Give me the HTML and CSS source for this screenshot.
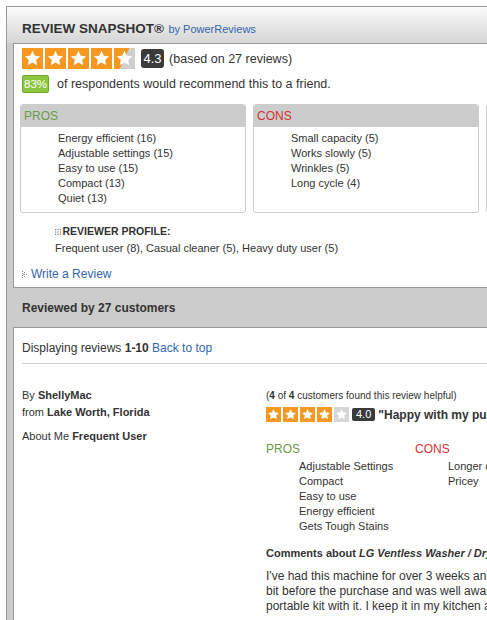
FILE: index.html
```html
<!DOCTYPE html>
<html lang="en">
<head>
<meta charset="utf-8">
<title>Review Snapshot</title>
<link rel="stylesheet" href="styles.css">
</head>
<body>
<svg class="defs" width="0" height="0" aria-hidden="true">
  <defs>
    <path id="starpath" d="M12 3.2l2.6 5.6 6.1.7-4.5 4.2 1.2 6-5.4-3-5.4 3 1.2-6-4.5-4.2 6.1-.7z" fill="#fff"/>
  </defs>
</svg>
<div class="widget">
  <div class="snap-head"><span class="snap-title">REVIEW SNAPSHOT®</span> <span class="by">by PowerReviews</span></div>
  <div class="snap-body">
    <div class="rating-row">
      <div class="stars big">
        <span class="star on"><svg viewBox="0 0 24 24"><use href="#starpath"/></svg></span>
        <span class="star on"><svg viewBox="0 0 24 24"><use href="#starpath"/></svg></span>
        <span class="star on"><svg viewBox="0 0 24 24"><use href="#starpath"/></svg></span>
        <span class="star on"><svg viewBox="0 0 24 24"><use href="#starpath"/></svg></span>
        <span class="star half"><svg viewBox="0 0 24 24"><use href="#starpath"/></svg></span>
      </div>
      <span class="score">4.3</span>
      <span class="based">(based on 27 reviews)</span>
    </div>
    <div class="recommend-row">
      <span class="pct">83%</span>
      <span class="recommend-text">of respondents would recommend this to a friend.</span>
    </div>
    <div class="tag-boxes">
      <section class="tag-box pros">
        <h3>PROS</h3>
        <ul>
          <li>Energy efficient (16)</li>
          <li>Adjustable settings (15)</li>
          <li>Easy to use (15)</li>
          <li>Compact (13)</li>
          <li>Quiet (13)</li>
        </ul>
      </section>
      <section class="tag-box cons">
        <h3>CONS</h3>
        <ul>
          <li>Small capacity (5)</li>
          <li>Works slowly (5)</li>
          <li>Wrinkles (5)</li>
          <li>Long cycle (4)</li>
        </ul>
      </section>
      <section class="tag-box uses" aria-hidden="true">
        <div class="blank-head"></div>
      </section>
    </div>
    <div class="profile">
      <div class="profile-title"><svg class="dots" viewBox="0 0 6 6" width="6" height="6"><g fill="#777"><rect x="0" y="0" width="1.2" height="1.2"/><rect x="2.4" y="0" width="1.2" height="1.2"/><rect x="4.8" y="0" width="1.2" height="1.2"/><rect x="0" y="2.4" width="1.2" height="1.2"/><rect x="2.4" y="2.4" width="1.2" height="1.2"/><rect x="4.8" y="2.4" width="1.2" height="1.2"/><rect x="0" y="4.8" width="1.2" height="1.2"/><rect x="2.4" y="4.8" width="1.2" height="1.2"/><rect x="4.8" y="4.8" width="1.2" height="1.2"/></g></svg>REVIEWER PROFILE:</div>
      <div>Frequent user (8), Casual cleaner (5), Heavy duty user (5)</div>
    </div>
    <div class="write">
      <svg class="arrow" viewBox="0 0 5 7" width="5" height="7"><g fill="#888"><rect x="0" y="0" width="1" height="1"/><rect x="0" y="2" width="1" height="1"/><rect x="0" y="4" width="1" height="1"/><rect x="0" y="6" width="1" height="1"/><rect x="2" y="1" width="1" height="1"/><rect x="2" y="5" width="1" height="1"/><rect x="4" y="3" width="1" height="1"/><rect x="1" y="3" width="1" height="1"/><rect x="2" y="3" width="1" height="1"/></g></svg>
      <a class="link" href="#">Write a Review</a>
    </div>
  </div>
  <div class="reviews-head">Reviewed by 27 customers</div>
  <div class="reviews-body">
    <div class="displaying">Displaying reviews <b>1-10</b> <a class="link" href="#">Back to top</a></div>
    <div class="review">
      <div class="reviewer">
        <div>By <b>ShellyMac</b></div>
        <div>from <b>Lake Worth, Florida</b></div>
        <div class="about">About Me <b>Frequent User</b></div>
      </div>
      <div class="review-main">
        <div class="helpful">(<b>4</b> of <b>4</b> customers found this review helpful)</div>
        <div class="review-rating">
          <div class="stars small">
            <span class="star on"><svg viewBox="0 0 24 24"><use href="#starpath"/></svg></span>
            <span class="star on"><svg viewBox="0 0 24 24"><use href="#starpath"/></svg></span>
            <span class="star on"><svg viewBox="0 0 24 24"><use href="#starpath"/></svg></span>
            <span class="star on"><svg viewBox="0 0 24 24"><use href="#starpath"/></svg></span>
            <span class="star off"><svg viewBox="0 0 24 24"><use href="#starpath"/></svg></span>
          </div>
          <span class="score small-score">4.0</span>
          <span class="review-title">"Happy with my purchase"</span>
        </div>
        <div class="review-tags">
          <div class="rtag pros">
            <h4>PROS</h4>
            <ul>
              <li>Adjustable Settings</li>
              <li>Compact</li>
              <li>Easy to use</li>
              <li>Energy efficient</li>
              <li>Gets Tough Stains</li>
            </ul>
          </div>
          <div class="rtag cons">
            <h4>CONS</h4>
            <ul>
              <li>Longer cycle</li>
              <li>Pricey</li>
            </ul>
          </div>
        </div>
        <div class="comments-title">Comments about <i>LG Ventless Washer / Dryer Combo</i>:</div>
        <p class="comments-text">I've had this machine for over 3 weeks and love it. I researched it quite a<br>bit before the purchase and was well aware that I needed to buy the<br>portable kit with it. I keep it in my kitchen and hook it up to the sink.</p>
      </div>
    </div>
  </div>
</div>
</body>
</html>
```

FILE: styles.css
```css
html, body {
  margin: 0;
  padding: 0;
  overflow: hidden;
}

body {
  font-family: "Liberation Sans", Arial, sans-serif;
  color: #333;
  background: #fff;
}

.defs {
  position: absolute;
  width: 0;
  height: 0;
}

.link {
  color: #3366aa;
  text-decoration: none;
}

.widget {
  width: 780px;
  margin: 6px 0 0 6px;
  border: 1px solid #999;
  background: #ccc;
}

.snap-head {
  background: linear-gradient(#fbfbfb, #d5d5d5);
  padding: 13px 15px 6px;
  line-height: 16px;
  white-space: nowrap;
}

.snap-title {
  font-size: 13.5px;
  font-weight: bold;
  color: #333;
}

.by {
  font-size: 11px;
  color: #3366aa;
}

.snap-body {
  background: #fff;
  border: 1px solid #999;
  margin: 0 6px;
  padding: 4px 8px 5px;
}

.rating-row {
  display: flex;
  align-items: center;
  height: 21px;
}

.stars {
  display: flex;
  gap: 2px;
}

.star {
  display: block;
  background: #f6971f;
}

.star svg {
  display: block;
  width: 100%;
  height: 100%;
}

.stars.big .star {
  width: 21px;
  height: 21px;
}

.star.half {
  background: linear-gradient(115deg, #f6971f 50%, #cfcfcf 50%);
}

.star.off {
  background: #d6d6d6;
}

.score {
  margin-left: 6px;
  background: #3a3a3a;
  color: #fff;
  font-size: 13px;
  height: 19px;
  line-height: 19px;
  padding: 0 2.5px;
  border-radius: 3px;
}

.based {
  margin-left: 5px;
  font-size: 12.5px;
  white-space: nowrap;
}

.recommend-row {
  margin-top: 6px;
  display: flex;
  align-items: center;
  gap: 8px;
  height: 18px;
}

.pct {
  box-sizing: border-box;
  width: 27px;
  height: 18px;
  background: #8cc63f;
  border: 1px solid #72a92e;
  border-radius: 2px;
  color: #fff;
  font-size: 11.5px;
  line-height: 16px;
  text-align: center;
}

.recommend-text {
  font-size: 12.5px;
  white-space: nowrap;
}

.tag-boxes {
  margin: 11px 0 0 -2px;
  display: flex;
  gap: 7px;
}

.tag-box {
  flex: none;
  box-sizing: border-box;
  width: 226px;
  height: 109px;
  border: 1px solid #ccc;
  border-radius: 3px;
  background: #fff;
  overflow: hidden;
}

.tag-box h3 {
  margin: 0;
  background: #ccc;
  height: 22px;
  line-height: 23px;
  padding: 0 3px;
  font-size: 12px;
  font-weight: normal;
}

.blank-head {
  height: 22px;
  background: #ccc;
}

.pros h3, .pros h4 {
  color: #6b9b47;
}

.cons h3, .cons h4 {
  color: #cc3333;
}

.tag-box ul {
  list-style: none;
  margin: 0;
  padding: 4px 0 0 37px;
  font-size: 11px;
  line-height: 15px;
}

.profile {
  margin-top: 10px;
  padding-left: 33px;
  font-size: 11px;
  line-height: 17px;
  white-space: nowrap;
}

.profile-title {
  display: flex;
  align-items: center;
  gap: 1.5px;
  font-size: 10.5px;
  font-weight: bold;
}

.write {
  margin-top: 9px;
  display: flex;
  align-items: center;
  gap: 4px;
  font-size: 12px;
  line-height: 16px;
}

.reviews-head {
  padding: 13px 15px 11px;
  line-height: 15px;
  font-size: 12px;
  font-weight: bold;
  color: #333;
}

.reviews-body {
  background: #fff;
  border: 1px solid #999;
  margin: 0 6px;
  padding: 0 8px 40px;
}

.displaying {
  padding: 12px 0 7px;
  line-height: 16px;
  font-size: 12px;
  border-bottom: 1px solid #ccc;
}

.review {
  margin-top: 22.5px;
  display: grid;
  grid-template-columns: 244px 1fr;
}

.reviewer {
  font-size: 11px;
  line-height: 17px;
}

.reviewer .about {
  margin-top: 7px;
}

.review-main {
  white-space: nowrap;
}

.helpful {
  font-size: 10px;
  line-height: 17px;
}

.review-rating {
  margin-top: 3px;
  display: flex;
  align-items: center;
  height: 16px;
}

.stars.small .star {
  width: 15px;
  height: 15px;
}

.small-score {
  margin-left: 3px;
  font-size: 11px;
  height: 13px;
  line-height: 13px;
  padding: 0 4px;
  border-radius: 2px;
}

.review-title {
  margin-left: 3px;
  font-size: 12px;
  font-weight: bold;
}

.review-tags {
  margin-top: 18px;
  display: grid;
  grid-template-columns: 149px 1fr;
}

.rtag h4 {
  margin: 0;
  font-size: 12px;
  font-weight: normal;
  line-height: 16px;
}

.rtag ul {
  list-style: none;
  margin: 2px 0 0;
  padding-left: 33px;
  font-size: 11px;
  line-height: 15px;
}

.comments-title {
  margin-top: 12.5px;
  font-size: 11px;
  font-weight: bold;
  line-height: 15px;
}

.comments-text {
  margin: 7.5px 0 0;
  font-size: 12px;
  line-height: 15px;
}
```
